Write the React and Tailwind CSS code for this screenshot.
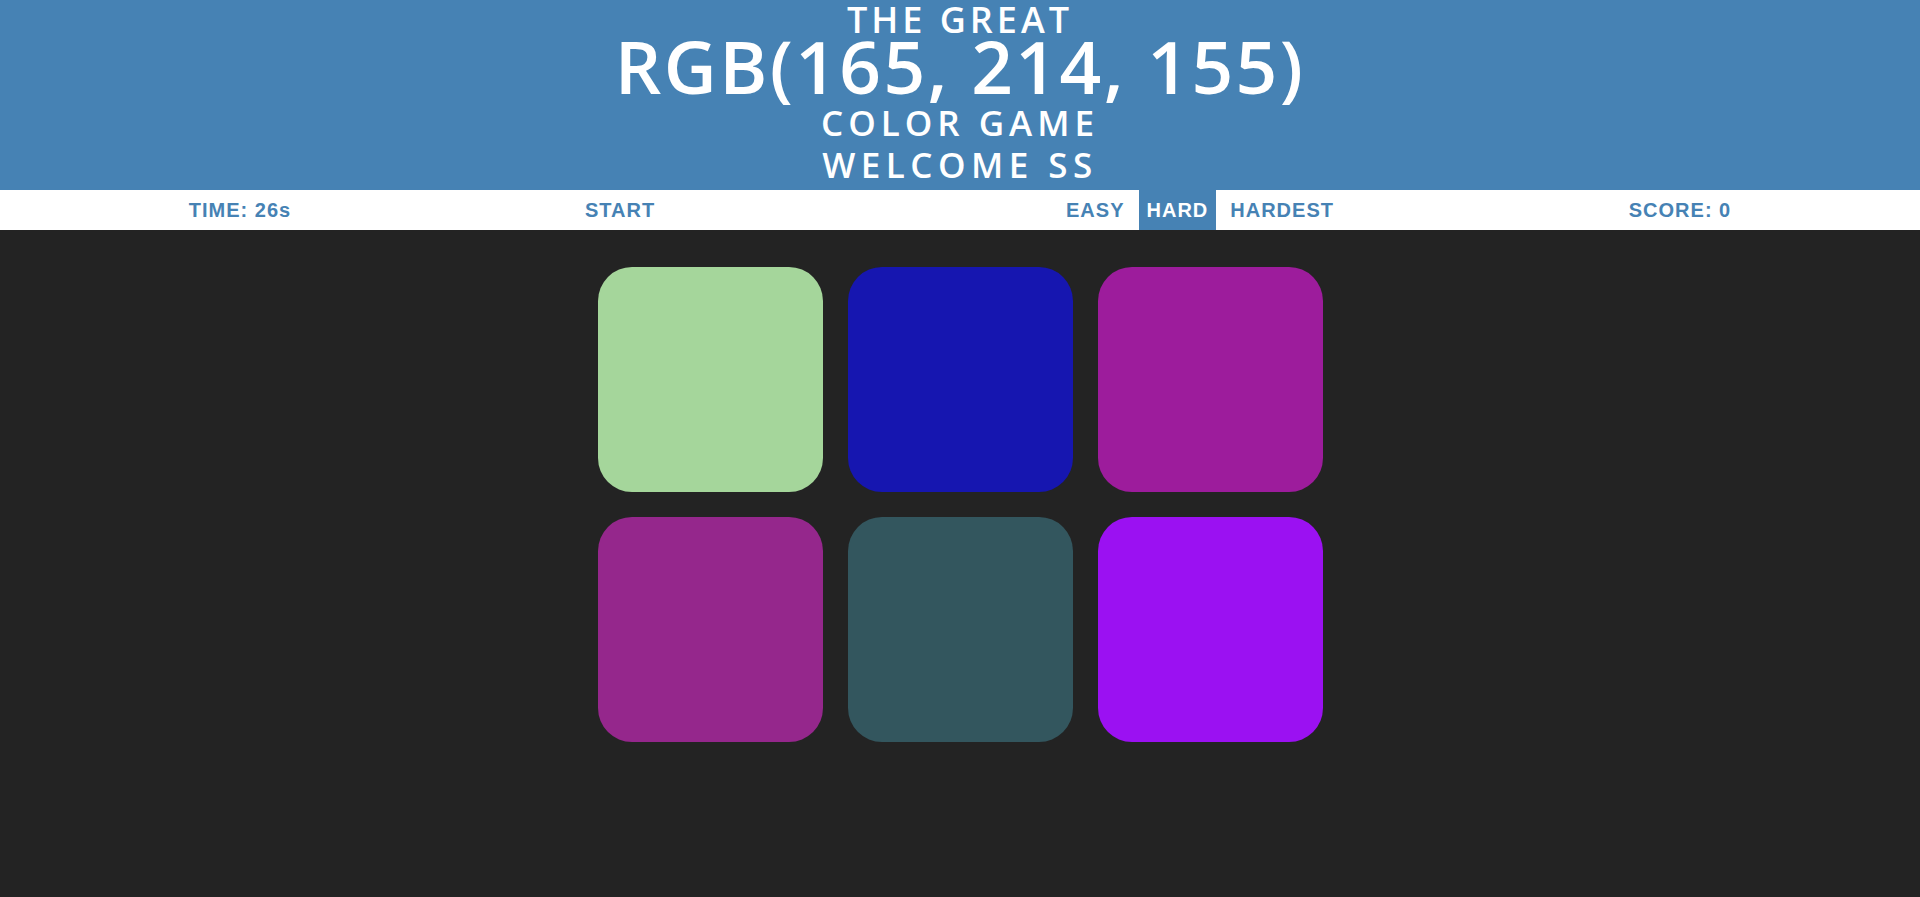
import React from 'react'

const squares = ['#a5d69b', '#1616b0', '#9d1c9c', '#95278c', '#33565e', '#9b11f2']

export default function App() {
    return (
        <div className="min-h-[897px] bg-[#232323]">
            {/* header */}
            <h1 className="h-[190px] bg-[#4682b4] text-center uppercase text-white font-semibold" style={{ fontFamily: '"Open Sans", sans-serif' }}>
                <span className="block text-[36px] leading-[40px] tracking-[4px]">The Great</span>
                <span className="block text-[73px] leading-[52px] tracking-[2.4px]">RGB(165, 214, 155)</span>
                <span className="block mt-[10px] text-[35px] leading-[42px] tracking-[5px]">Color Game</span>
                <span className="block text-[35px] leading-[42px] tracking-[5.5px]">Welcome ss</span>
            </h1>

            {/* stripe */}
            <div className="grid h-[40px] grid-cols-4 items-center bg-white text-[20px] font-bold tracking-[1px] text-[#4682b4]" style={{ fontFamily: '"Liberation Sans", Arial, sans-serif' }}>
                <span className="text-center">TIME: 26s</span>
                <span className="pl-[105px]">START</span>
                <div className="flex h-full items-stretch justify-center gap-[6px]">
                    <button className="px-[8px]">EASY</button>
                    <button className="bg-[#4682b4] px-[8px] text-white">HARD</button>
                    <button className="px-[8px]">HARDEST</button>
                </div>
                <span className="text-center">SCORE: 0</span>
            </div>

            {/* squares */}
            <div className="mx-auto grid w-[725px] grid-cols-3 gap-[25px] pt-[37px]">
                {squares.map((c, i) => (
                    <div key={i} className="h-[225px] rounded-[34px]" style={{ backgroundColor: c }} />
                ))}
            </div>
        </div>
    )
}
